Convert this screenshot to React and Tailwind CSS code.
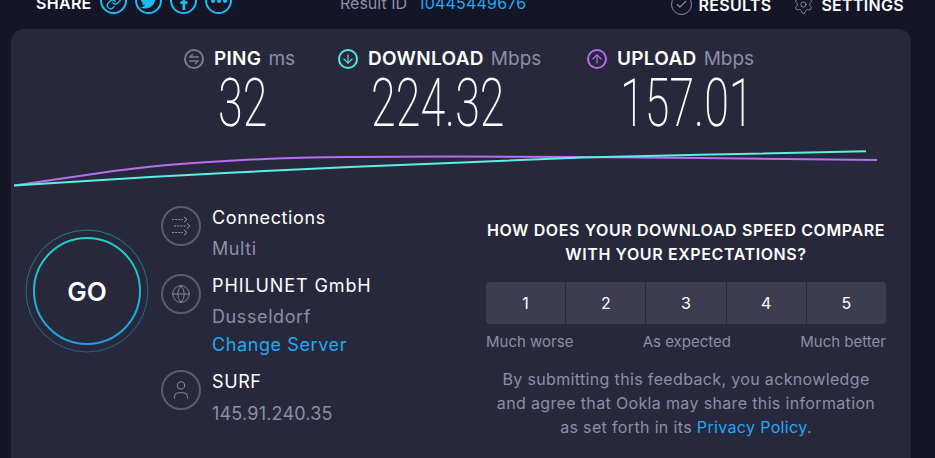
import { Link, Check, Settings, ArrowDown, ArrowUp, Globe, User } from 'lucide-react'
import { FaTwitter, FaFacebookF } from 'react-icons/fa'

const font = { fontFamily: 'Inter, "Noto Sans", sans-serif' }

function ShareButton({ children }) {
  return (
    <span className="flex h-[27px] w-[27px] items-center justify-center rounded-full border-2 border-[#1cbdf5] text-[#1cbdf5]">
      {children}
    </span>
  )
}

function Metric({ icon, label, unit, className }) {
  return (
    <div className={className}>
      <div className="flex h-[20px] items-center">
        {icon}
        <span className="ml-[10px] text-[19px] font-semibold leading-[20px] tracking-[0.3px] text-white">{label}</span>
        <span className="ml-[7px] text-[19px] leading-[20px] text-[#8d8fa6]">{unit}</span>
      </div>
    </div>
  )
}

function Value({ children, className }) {
  return (
    <div className={`origin-left scale-x-[0.68] text-[66px] leading-[66px] font-extralight text-white font-['Roboto'] ${className}`}>
      {children}
    </div>
  )
}

function ServerRow({ icon, className, children }) {
  return (
    <div className={`flex gap-[11px] ${className}`}>
      <span className="mt-[3px] flex h-[40px] w-[40px] shrink-0 items-center justify-center rounded-full border-2 border-[#5b5c6f] text-[#9193a8]">
        {icon}
      </span>
      <div className="text-[18px] tracking-[0.6px]">{children}</div>
    </div>
  )
}

function ConnectionsIcon() {
  return (
    <svg width="20" height="20" viewBox="0 0 20 20" fill="none" stroke="currentColor" strokeWidth="1">
      <path d="M1 3.5h11" strokeDasharray="2 1.2" />
      <path d="M3 10h13" strokeDasharray="2 1.2" />
      <path d="M1 16.5h11" strokeDasharray="2 1.2" />
      <path d="M13 1l3 2.5-3 2.5M16 7.5l3 2.5-3 2.5M13 14l3 2.5-3 2.5" />
    </svg>
  )
}

export default function App() {
  return (
    <div style={font} className="h-[458px] w-[935px] overflow-hidden bg-[#141526] text-white">
      {/* Header, cut off by the top of the window */}
      <div className="flex h-[29px] items-end pl-[36px] pr-[31px]">
        <span className="mb-[16px] w-[64px] text-[16px] font-semibold leading-[20px] tracking-[0.3px]">SHARE</span>
        <div className="mb-[15px] flex gap-[8px]">
          <ShareButton><Link size={16} className="mt-[3px]" /></ShareButton>
          <ShareButton><FaTwitter size={17} className="mt-[1px]" /></ShareButton>
          <ShareButton><FaFacebookF size={14} className="mt-[5px]" /></ShareButton>
          <ShareButton>
            <span className="flex gap-[2px]">
              <i className="h-[4px] w-[4px] rounded-full bg-[#1cbdf5]" />
              <i className="h-[4px] w-[4px] rounded-full bg-[#1cbdf5]" />
              <i className="h-[4px] w-[4px] rounded-full bg-[#1cbdf5]" />
            </span>
          </ShareButton>
        </div>
        <span className="mb-[16px] ml-[108px] w-[78px] text-[16px] leading-[20px] text-[#8d8fa6]">Result ID</span>
        <span className="mb-[16px] text-[16px] leading-[20px] tracking-[0.2px] text-[#20aaf5]">10445449676</span>
        <span className="mb-[14px] ml-auto flex h-[21px] items-center gap-[6px]">
          <span className="flex h-[21px] w-[21px] items-center justify-center rounded-full border border-[#9193a8] text-[#9193a8]"><Check size={13} /></span>
          <span className="text-[16px] font-semibold tracking-[0.3px]">RESULTS</span>
        </span>
        <span className="mb-[14px] ml-[22px] flex h-[21px] items-center gap-[7px]">
          <Settings size={21} strokeWidth={1} className="text-[#9193a8]" />
          <span className="text-[16px] font-semibold tracking-[0.3px]">SETTINGS</span>
        </span>
      </div>

      {/* Main panel */}
      <div className="ml-[11px] h-[460px] w-[900px] rounded-t-[13px] bg-[#27283b] pt-[20px]">
        <div className="flex">
          <Metric
            className="ml-[173px] w-[154px]"
            label="PING"
            unit="ms"
            icon={
              <span className="flex h-[20px] w-[20px] items-center justify-center rounded-full border-2 border-[#7a7b8f] text-[#7a7b8f]">
                <svg width="12" height="12" viewBox="0 0 12 12" fill="none" stroke="currentColor" strokeWidth="1.4">
                  <path d="M11 4H2l3-3M1 8h9l-3 3" />
                </svg>
              </span>
            }
          />
          <Metric
            className="w-[249px]"
            label="DOWNLOAD"
            unit="Mbps"
            icon={
              <span className="flex h-[20px] w-[20px] items-center justify-center rounded-full border-2 border-[#54e8dd] text-[#54e8dd]">
                <ArrowDown size={14} />
              </span>
            }
          />
          <Metric
            label="UPLOAD"
            unit="Mbps"
            icon={
              <span className="flex h-[20px] w-[20px] items-center justify-center rounded-full border-2 border-[#b56ef0] text-[#b56ef0]">
                <ArrowUp size={14} />
              </span>
            }
          />
        </div>

        <div className="mt-[2px] flex h-[66px]">
          <Value className="ml-[207px] w-[153px]">32</Value>
          <Value className="w-[249px]">224.32</Value>
          <Value>157.01</Value>
        </div>

        {/* Speed graph */}
        <svg className="mt-[9px] block" width="900" height="42" viewBox="0 0 900 42" fill="none" strokeWidth="2" strokeLinejoin="round">
          <path d="M3 39.5L89 27Q112 23.5 139 20.7T219 14.7T339 11L439 10.5L572 11L689 12L866 14" stroke="#b96ff0" />
          <path d="M3 39.5L139 31L219 26.7L339 21L439 17L572 11.5L689 8.7L855 5.3" stroke="#5cefe3" />
        </svg>

        <div className="mt-[15px] flex">
          {/* Go button */}
          <div className="relative ml-[14px] mt-[26px] flex h-[124px] w-[124px] shrink-0 items-center justify-center">
            <svg className="absolute inset-0" width="124" height="124" viewBox="0 0 124 124" fill="none">
              <defs>
                <linearGradient id="go-ring" x1="0" y1="0" x2="0" y2="1">
                  <stop offset="0" stopColor="#1fd4c4" />
                  <stop offset="1" stopColor="#1e9fe0" />
                </linearGradient>
              </defs>
              <circle cx="62" cy="62" r="61" stroke="url(#go-ring)" strokeOpacity="0.5" strokeWidth="1" />
              <circle cx="62" cy="62" r="53" stroke="url(#go-ring)" strokeWidth="2" />
            </svg>
            <span className="text-[26px] font-semibold">GO</span>
          </div>

          {/* Server details */}
          <div className="ml-[12px] w-[300px] shrink-0">
            <ServerRow icon={<ConnectionsIcon />}>
              <div className="leading-[30px]">Connections</div>
              <div className="leading-[32px] text-[#8d8fa6]">Multi</div>
            </ServerRow>
            <ServerRow className="mt-[6px]" icon={<Globe size={20} strokeWidth={1} />}>
              <div className="leading-[30px] tracking-[0.9px]">PHILUNET GmbH</div>
              <div className="leading-[32px] text-[#8d8fa6]">Dusseldorf</div>
              <div className="leading-[24px] text-[#20aaf5]">Change Server</div>
            </ServerRow>
            <ServerRow className="mt-[10px]" icon={<User size={22} strokeWidth={1} />}>
              <div className="leading-[30px]">SURF</div>
              <div className="leading-[33px] tracking-[0.2px] text-[#8d8fa6]">145.91.240.35</div>
            </ServerRow>
          </div>

          {/* Feedback */}
          <div className="ml-[25px] w-[400px] shrink-0 pt-[15px]">
            <div className="whitespace-nowrap text-center text-[16px] font-semibold leading-[24px] tracking-[0.6px]">
              HOW DOES YOUR DOWNLOAD SPEED COMPARE<br />WITH YOUR EXPECTATIONS?
            </div>
            <div className="mt-[16px] flex h-[42px] gap-px overflow-hidden rounded-[4px] text-[16px]">
              {[1, 2, 3, 4, 5].map((n) => (
                <div key={n} className="flex flex-1 items-center justify-center bg-[#3c3d51]">{n}</div>
              ))}
            </div>
            <div className="mt-[8px] flex justify-between text-[15px] leading-[20px] text-[#8d8fa6]">
              <span>Much worse</span>
              <span>As expected</span>
              <span>Much better</span>
            </div>
            <p className="mt-[15px] whitespace-nowrap text-center text-[16px] leading-[24px] tracking-[0.35px] text-[#8d8fa6]">
              By submitting this feedback, you acknowledge<br />
              and agree that Ookla may share this information<br />
              as set forth in its <span className="text-[#20aaf5]">Privacy Policy</span>.
            </p>
          </div>
        </div>
      </div>
    </div>
  )
}
